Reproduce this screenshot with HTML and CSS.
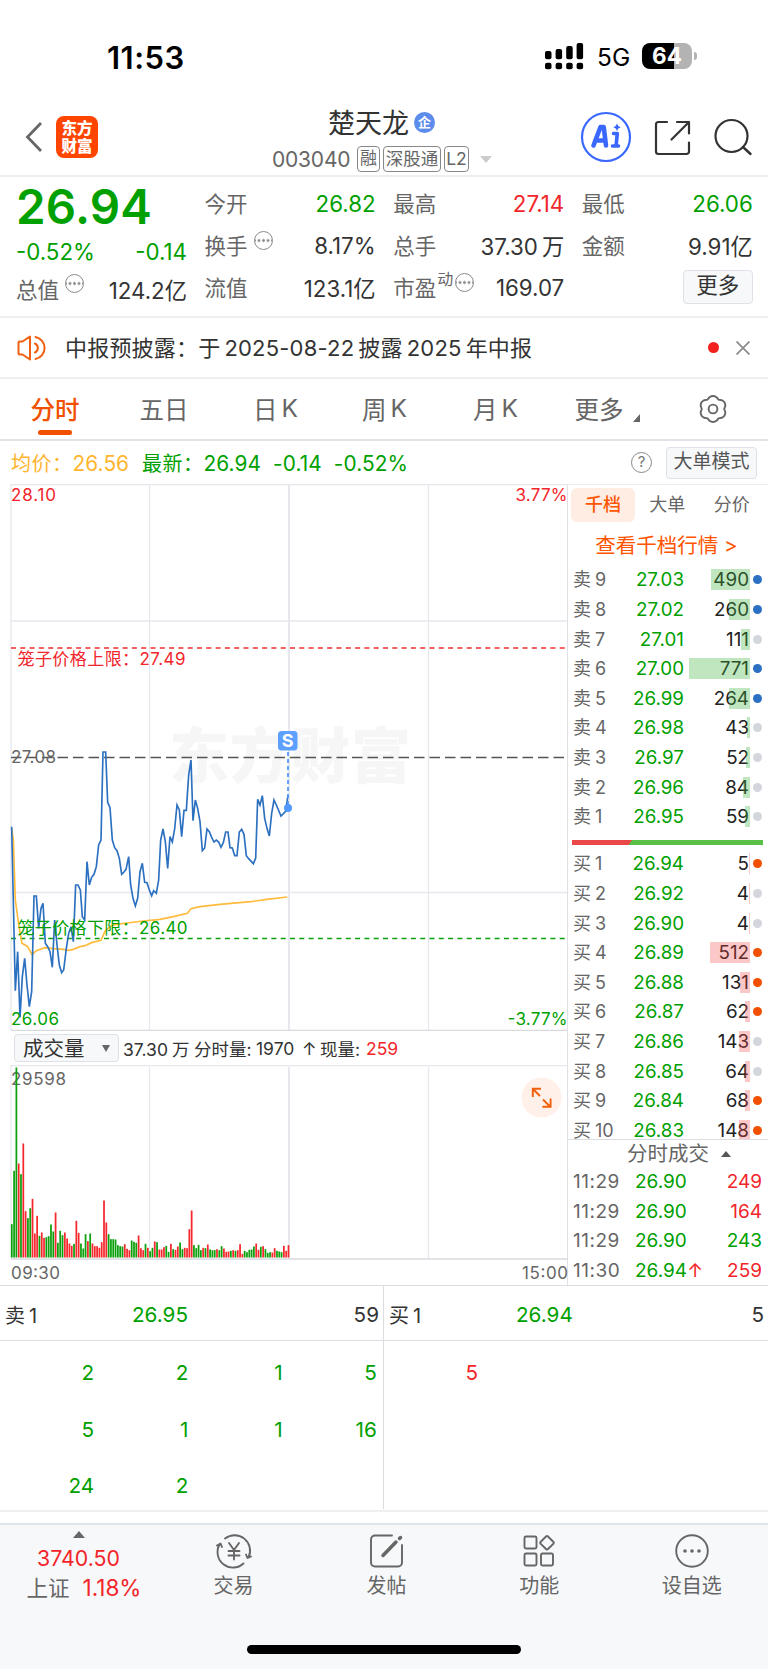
FILE: index.html
```html
<!DOCTYPE html>
<html lang="zh-CN">
<head>
<meta charset="utf-8">
<title>楚天龙 003040</title>
<link rel="stylesheet" href="styles.css">
</head>
<body>
<div class="app">
  <div class="status">
    <span class="time">11:53</span>
    <svg class="signal" width="39" height="27" viewBox="0 0 39 27">
      <g fill="#000">
        <rect x="0" y="8" width="6.5" height="8.3" rx="2"/><rect x="10.6" y="6" width="6.5" height="10.3" rx="2"/><rect x="21.2" y="3" width="6.5" height="13.3" rx="2"/><rect x="31.6" y="0" width="6.5" height="16.3" rx="2"/>
        <rect x="0" y="19.7" width="6.5" height="6.6" rx="2"/><rect x="10.6" y="19.7" width="6.5" height="6.6" rx="2"/><rect x="21.2" y="19.7" width="6.5" height="6.6" rx="2"/><rect x="31.6" y="19.7" width="6.5" height="6.6" rx="2"/>
      </g>
    </svg>
    <span class="net">5G</span>
    <span class="battery">64</span><span class="nub"></span>
  </div>

  <header class="header">
    <svg class="back" width="18" height="32" viewBox="0 0 18 32"><path d="M16 2 2.5 16 16 30" fill="none" stroke="#666" stroke-width="2.8"/></svg>
    <div class="logo"><span>东方</span><span>财富</span></div>
    <div class="title">
      <div class="name">楚天龙<span class="badge">企</span></div>
      <div class="code"><span class="num">003040</span><span class="tag t1">融</span><span class="tag t2">深股通</span><span class="tag t3">L2</span><i class="caret"></i></div>
    </div>
    <svg class="actions" width="176" height="52" viewBox="0 0 176 52" fill="none" stroke-linecap="round" stroke-linejoin="round">
      <circle cx="26" cy="26" r="24" stroke="#3a68ff" stroke-width="2.2"/>
      <path d="M13.5 34.5 20.5 16h3.2l2.3 18.5M17 29.5h7.500" stroke="#3a68ff" stroke-width="4.600"/>
      <path d="M33.500 22.500h3.800l-1.200 12M32.500 35h6" stroke="#3a68ff" stroke-width="3.600"/>
      <path d="M37 12.500q.7 3 3.700 3.700-3 .7-3.700 3.700-.7-3-3.700-3.700 3-.7 3.700-3.700z" fill="#3a68ff"/>
      <path d="M87 11H78.500a2.500 2.500 0 0 0-2.500 2.500V40.500a2.500 2.500 0 0 0 2.500 2.500H106.500a2.500 2.500 0 0 0 2.500-2.500V31.500M97 11h12v11.500M109 11 91.500 28.500" stroke="#333" stroke-width="2.2"/>
      <circle cx="151.500" cy="25" r="16" stroke="#333" stroke-width="2.2"/><path d="m163 36 7.500 7" stroke="#333" stroke-width="2.400"/>
    </svg>
  </header>

  <section class="quote">
    <div class="col">
      <div class="last">26.94</div>
      <div class="row chg g"><span>-0.52%</span><span>-0.14</span></div>
      <div class="row"><span class="lb">总值<i class="dots"></i></span><span>124.2亿</span></div>
    </div>
    <div class="col">
      <div class="row"><span class="lb">今开</span><span class="g">26.82</span></div>
      <div class="row"><span class="lb">换手<i class="dots"></i></span><span>8.17%</span></div>
      <div class="row"><span class="lb">流值</span><span>123.1亿</span></div>
    </div>
    <div class="col">
      <div class="row"><span class="lb">最高</span><span class="r">27.14</span></div>
      <div class="row"><span class="lb">总手</span><span>37.30<b class="sp"></b>万</span></div>
      <div class="row"><span class="lb">市盈<sup>动</sup><i class="dots tight"></i></span><span>169.07</span></div>
    </div>
    <div class="col">
      <div class="row"><span class="lb">最低</span><span class="g">26.06</span></div>
      <div class="row"><span class="lb">金额</span><span>9.91亿</span></div>
      <div class="row end"><span class="more">更多</span></div>
    </div>
  </section>

  <section class="notice">
    <svg width="30" height="26" viewBox="0 0 30 26" fill="none" stroke="#f06010" stroke-width="2" stroke-linejoin="round" stroke-linecap="round"><path d="M1.500 7.500Q1.500 6.500 2.500 6.500H5.500L13 1.500V24.500L5.500 19.500H2.500Q1.500 19.500 1.500 18.500zM18 8.500a5 5 0 0 1 0 9M18.500 2a11.200 11.200 0 0 1 0 22"/></svg>
    <span class="msg">中报预披露：于<b class="sp"></b>2025-08-22<b class="sp"></b>披露<b class="sp"></b>2025<b class="sp"></b>年中报</span>
    <i class="reddot"></i>
    <svg width="14" height="14" viewBox="0 0 14 14"><path d="M.5.500l13 13M13.500.500l-13 13" stroke="#8a8a8a" stroke-width="1.700"/></svg>
  </section>

  <nav class="tabs">
    <span class="on">分时</span><span>五日</span><span>日<b class="sp"></b>K</span><span>周<b class="sp"></b>K</span><span>月<b class="sp"></b>K</span><span class="mo">更多<i></i></span>
    <span class="gear"><svg width="30" height="30" viewBox="0 0 30 30" fill="none" stroke="#666" stroke-width="1.900" stroke-linejoin="round"><path d="M11.500 3.200Q15 .8 18.500 3.200L20.500 5.600 23.700 6.200Q27.500 8 27.300 12L26.200 15 27.300 18Q27.500 22 23.700 23.800L20.500 24.400 18.500 26.800Q15 29.200 11.500 26.800L9.500 24.400 6.300 23.800Q2.500 22 2.700 18L3.800 15 2.700 12Q2.500 8 6.300 6.200L9.500 5.600z"/><circle cx="15" cy="15" r="4.400"/></svg></span>
  </nav>

  <section class="info">
    <span class="avg">均价：<b>26.56</b></span><span class="now">最新：<b>26.94</b><b>-0.14</b><b>-0.52%</b></span>
    <span class="help">?</span><span class="mode">大单模式</span>
  </section>

  <main class="main">
    <div class="charts">
      <svg class="chart" width="568" height="547" viewBox="0 484 568 547">
        <text class="wm" x="169" y="778" textLength="242">东方财富</text>
        <g class="grid">
          <path d="M11 484.500H568M11 621H567M11 892.500H567"/><path d="M11 484V1030M149.500 484V1030M428.500 484V1030"/><path d="M289 484V1030" stroke-width="2"/>
        </g>
        <path d="M11 1030.500H568" stroke="#d9dade" stroke-width="1.500"/>
        <path d="M11 648H567" stroke="#ee2e2e" stroke-width="1.700" stroke-dasharray="5 4.300"/>
        <path d="M11 757.500H567" stroke="#555" stroke-width="1.500" stroke-dasharray="10.500 5"/>
        <path d="M11 938.500H567" stroke="#0ca00c" stroke-width="1.700" stroke-dasharray="5 4.300"/>
        <g transform="translate(0 640) scale(.33333)" fill="none" stroke-width="5" stroke-linejoin="miter">
          <polyline stroke="#ffbb3d" points="35,565 40,600 46,780 57,860 66,910 83,920 96,944 109,932 135,923 160,926 190,928 206,931 220,928 240,920 255,917 275,908 303,901 316,872 330,860 344,854 380,849 430,843 480,838 520,830 562,820 573,806 600,800 660,793 760,784 800,778 862,771"/>
          <polyline stroke="#2c70c0" points="35,560 46,1052 53,935 60,1132 67,1010 74,955 81,1035 88,1100 95,1055 102,768 109,768 116,865 123,805 129,790 136,910 143,920 150,935 157,982 164,840 171,915 178,975 185,998 191,990 199,925 206,880 213,860 220,905 227,735 234,735 241,750 247,830 254,840 261,665 268,735 275,712 282,703 289,680 296,615 303,600 309,336 317,336 323,487 330,503 337,600 344,623 351,632 358,655 365,703 372,696 378,688 386,650 392,735 399,775 406,798 413,775 420,695 427,670 434,727 441,728 448,750 455,767 461,752 469,760 476,720 482,600 489,567 496,605 503,685 510,590 517,606 524,567 531,495 538,510 545,590 552,511 559,511 566,405 573,360 579,542 586,480 593,505 600,545 607,632 614,624 621,567 628,575 635,592 642,606 649,600 656,606 663,622 670,608 677,576 684,576 690,623 697,624 704,647 711,647 718,576 725,568 732,583 739,647 746,656 760,671 767,655 773,478 780,495 787,467 794,535 801,565 808,588 815,520 822,480 829,495 843,528 857,514 864,465"/>
        </g>
        <path d="M288 752V808" stroke="#4f95fa" stroke-width="1.700" stroke-dasharray="4 3"/>
        <circle cx="288" cy="808" r="4" fill="#5098fc"/>
        <rect x="278" y="731" width="19.500" height="19.500" rx="3.500" fill="#5da0ff"/>
        <text x="287.700" y="747.300" text-anchor="middle" class="s">S</text>
        <g class="ax">
          <text x="11" y="501" fill="#f2252b" textLength="45">28.10</text><text x="567.500" y="501" fill="#f2252b" text-anchor="end" textLength="52">3.77%</text>
          <text x="17.500" y="665" fill="#f2252b" textLength="168">笼子价格上限：27.49</text>
          <text x="11" y="762.500" fill="#666" textLength="45">27.08</text>
          <text x="17.500" y="934" fill="#00a000" textLength="170">笼子价格下限：26.40</text>
          <text x="11" y="1024.500" fill="#00a000" textLength="48">26.06</text><text x="567.500" y="1024.500" fill="#00a000" text-anchor="end" textLength="60">-3.77%</text>
        </g>
      </svg>
      <div class="volhead"><span class="sel">成交量<i></i></span><span class="v1">37.30<b class="sp"></b>万</span><span class="v2">分时量:</span><span class="v3">1970</span><span class="v4">↑</span><span class="v5">现量:</span><span class="r">259</span></div>
      <svg class="vol" width="568" height="220" viewBox="0 1065 568 220">
        <g class="grid"><path d="M11 1065.500H568M11 1065V1258M149.500 1067V1258M428.500 1067V1258"/><path d="M289 1067V1258" stroke-width="2"/></g>
        <path d="M11 1259H568" stroke="#d9dade" stroke-width="1.500"/>
        <text class="ax" x="11" y="1084.500" fill="#666" textLength="55">29598</text>
        <g id="bars"></g>
        <circle cx="541.500" cy="1097.500" r="20" fill="#fff0e9"/>
        <path d="M540 1096l-7-7M532.800 1097v-8.200h8.200M543 1099.500l7 7M550.600 1098.500v8.200h-8.200" fill="none" stroke="#f2600c" stroke-width="1.900"/>
        <text class="ax" x="11" y="1279" fill="#666" textLength="49">09:30</text><text class="ax" x="568" y="1279" fill="#666" text-anchor="end" textLength="46">15:00</text>
      </svg>
    </div>

    <aside class="side">
      <div class="stabs"><span class="on">千档</span><span>大单</span><span>分价</span></div>
      <div class="link">查看千档行情 &gt;</div>
      <div class="book">
        <div class="o"><span>卖<b class="sp"></b>9</span><em>27.03</em><u>490<s style="width:39px"></s></u><i class="b"></i></div>
        <div class="o"><span>卖<b class="sp"></b>8</span><em>27.02</em><u>260<s style="width:21px"></s></u><i class="b"></i></div>
        <div class="o"><span>卖<b class="sp"></b>7</span><em>27.01</em><u>111<s style="width:9px"></s></u><i></i></div>
        <div class="o"><span>卖<b class="sp"></b>6</span><em>27.00</em><u>771<s style="width:61px"></s></u><i class="b"></i></div>
        <div class="o"><span>卖<b class="sp"></b>5</span><em>26.99</em><u>264<s style="width:21px"></s></u><i class="b"></i></div>
        <div class="o"><span>卖<b class="sp"></b>4</span><em>26.98</em><u>43<s style="width:3px"></s></u><i></i></div>
        <div class="o"><span>卖<b class="sp"></b>3</span><em>26.97</em><u>52<s style="width:4px"></s></u><i></i></div>
        <div class="o"><span>卖<b class="sp"></b>2</span><em>26.96</em><u>84<s style="width:7px"></s></u><i></i></div>
        <div class="o"><span>卖<b class="sp"></b>1</span><em>26.95</em><u>59<s style="width:5px"></s></u><i></i></div>
      </div>
      <div class="ratio"></div>
      <div class="book bid">
        <div class="o"><span>买<b class="sp"></b>1</span><em>26.94</em><u>5<s style="width:1px"></s></u><i class="b"></i></div>
        <div class="o"><span>买<b class="sp"></b>2</span><em>26.92</em><u>4<s style="width:1px"></s></u><i></i></div>
        <div class="o"><span>买<b class="sp"></b>3</span><em>26.90</em><u>4<s style="width:1px"></s></u><i></i></div>
        <div class="o"><span>买<b class="sp"></b>4</span><em>26.89</em><u>512<s style="width:40px"></s></u><i class="b"></i></div>
        <div class="o"><span>买<b class="sp"></b>5</span><em>26.88</em><u>131<s style="width:10px"></s></u><i class="b"></i></div>
        <div class="o"><span>买<b class="sp"></b>6</span><em>26.87</em><u>62<s style="width:5px"></s></u><i class="b"></i></div>
        <div class="o"><span>买<b class="sp"></b>7</span><em>26.86</em><u>143<s style="width:11px"></s></u><i></i></div>
        <div class="o"><span>买<b class="sp"></b>8</span><em>26.85</em><u>64<s style="width:5px"></s></u><i></i></div>
        <div class="o"><span>买<b class="sp"></b>9</span><em>26.84</em><u>68<s style="width:5px"></s></u><i class="b"></i></div>
        <div class="o"><span>买<b class="sp"></b>10</span><em>26.83</em><u>148<s style="width:11px"></s></u><i class="b"></i></div>
      </div>
      <div class="thead">分时成交<i></i></div>
      <div class="deals">
        <div><span>11:29</span><em>26.90</em><u class="r">249</u></div>
        <div><span>11:29</span><em>26.90</em><u class="r">164</u></div>
        <div><span>11:29</span><em>26.90</em><u class="g">243</u></div>
        <div><span>11:30</span><em>26.94<b class="r">↑</b></em><u class="r">259</u></div>
      </div>
    </aside>
  </main>

  <section class="queue">
    <div class="half">
      <div class="qh"><span>卖<b class="sp"></b>1</span><em>26.95</em><u>59</u></div>
      <div class="qg"><span>2</span><span>2</span><span>1</span><span>5</span><span>5</span><span>1</span><span>1</span><span>16</span><span>24</span><span>2</span></div>
    </div>
    <div class="half">
      <div class="qh"><span>买<b class="sp"></b>1</span><em>26.94</em><u>5</u></div>
      <div class="qg r"><span>5</span></div>
    </div>
  </section>

  <footer class="foot">
    <div class="idx"><i></i><b class="r">3740.50</b><span>上证<b class="r">1.18%</b></span></div>
    <div class="it"><svg width="38" height="36" viewBox="0 0 38 36" fill="none" stroke="#666" stroke-width="1.900" stroke-linecap="round" stroke-linejoin="round"><path d="M10 5.500A15.500 15.500 0 0 1 33.500 24.500M36 23.500l-3.500 1.500-1.500-3.500M28.500 30.500A15.500 15.500 0 0 1 4.500 11.500M2 12.500 5.500 10.500 7 14"/><path d="m14 10 5 7 5-7M19 17v9.500M13.500 18h11M13.500 22.500h11"/></svg><span>交易</span></div>
    <div class="it"><svg width="38" height="36" viewBox="0 0 38 36" fill="none" stroke="#666" stroke-width="1.900" stroke-linecap="round"><path d="M24 2.500H7a4 4 0 0 0-4 4V29.500a4 4 0 0 0 4 4H30a4 4 0 0 0 4-4V12"/><path d="M15 22.500 28 9" stroke-width="3.500"/><path d="m31.500 5.500 1-1" stroke-width="3.500"/></svg><span>发帖</span></div>
    <div class="it"><svg width="38" height="36" viewBox="0 0 38 36" fill="none" stroke="#666" stroke-width="1.900" stroke-linejoin="round"><rect x="4.500" y="3.500" width="12" height="12" rx="1.500"/><rect x="4.500" y="20.500" width="12" height="12" rx="1.500"/><rect x="21" y="20.500" width="12" height="12" rx="1.500"/><path d="M26 3.500Q27 2.500 28 3.500L33.500 9Q34.300 9.800 33.500 10.600L28 16Q27 17 26 16L20.500 10.600Q19.700 9.800 20.500 9z"/></svg><span>功能</span></div>
    <div class="it"><svg width="38" height="36" viewBox="0 0 38 36"><circle cx="19" cy="18" r="15.800" fill="none" stroke="#666" stroke-width="1.900"/><g fill="#666"><circle cx="12" cy="18" r="1.800"/><circle cx="19" cy="18" r="1.800"/><circle cx="26" cy="18" r="1.800"/></g></svg><span>设自选</span></div>
    <div class="home"></div>
  </footer>
</div>
<script src="bars.js"></script>
</body>
</html>
```

FILE: bars.js
```js
// One entry per minute: direction, then bar height in thirds of a pixel.
const data = "g100 g260 g570 r282 g250 r342 r139 g118 g148 r176 r72 r125 g65 r75 r59 g61 g64 g99 g78 r135 g44 g80 g67 r75 r57 r42 r35 g41 r110 r74 g42 g27 g70 r49 g72 r42 r34 r34 r29 r46 r171 r105 g70 g55 g55 g54 g37 g34 g33 r40 r26 r22 g51 g47 g44 r66 r28 r22 g41 r29 g19 g29 r48 g46 r24 r24 r31 g35 g17 r41 g25 r23 r33 g45 g25 r29 r28 r85 r141 g37 g28 g38 g22 r29 g28 r39 g24 g22 g22 r25 g22 g34 r27 r17 r18 g20 r22 g20 r22 r40 r11 g20 g16 g23 g24 g33 r42 r23 g32 r34 g25 g14 g16 r15 r28 g20 g18 g16 r35 r20 r37";
const host = document.getElementById("bars");
data.split(" ").forEach((item, i) => {
  const h = Number(item.slice(1)) / 3;
  const bar = document.createElementNS("http://www.w3.org/2000/svg", "rect");
  bar.setAttribute("x", (10.9 + i * 2.306).toFixed(2));
  bar.setAttribute("y", (1257.5 - h).toFixed(2));
  bar.setAttribute("width", "1.75");
  bar.setAttribute("height", h.toFixed(2));
  bar.setAttribute("fill", item[0] === "g" ? "#0ca00c" : "#f5282d");
  host.appendChild(bar);
});
```

FILE: styles.css
```css
* { box-sizing: border-box; }
body { margin: 0; background: #fff; color: #333; font-family: Inter, "Noto Sans CJK SC", sans-serif; font-size: 21px; }
i, em { font-style: normal; }
b { font-weight: inherit; }
u, s { text-decoration: none; }
svg { display: block; flex: none; }
.g { color: #00a000; }
.r { color: #f2252b; }
.sp { display: inline-block; width: 4px; }
.app { width: 768px; height: 1669px; overflow: hidden; display: flex; flex-direction: column; }

.status { height: 95px; padding: 17px 0 0 107px; display: flex; align-items: center; color: #000; }
.time { font-size: 31px; font-weight: 600; width: 438px; letter-spacing: .5px; padding-top: 2px; }
.net { font-size: 24.500px; margin-left: 13px; width: 45px; padding-top: 1px; }
.battery { width: 50px; height: 26px; border-radius: 8px; background: linear-gradient(90deg, #000 32px, #b3b3b3 32px); color: #fff; font-weight: 700; font-size: 22.500px; line-height: 26px; text-align: center; }
.nub { width: 3px; height: 8px; margin-left: 1.500px; background: #b3b3b3; border-radius: 0 4px 4px 0; }

.header { height: 82px; border-bottom: 2px solid #eee; display: flex; align-items: flex-start; padding-left: 25px; }
.back { margin-top: 26px; }
.logo { margin: 20.500px 0 0 13px; width: 42px; height: 42px; border-radius: 8px; background: #ff4500; color: #fff; font: 900 15.500px/17.500px "Noto Sans CJK SC", sans-serif; display: flex; flex-direction: column; align-items: center; justify-content: center; }
.title { margin-left: 175px; width: 307px; }
.name { height: 46px; margin: 3px 0 2px; padding-left: 55px; display: flex; align-items: center; font-size: 27px; }
.badge { width: 21px; height: 21px; margin: 2px 0 0 5px; border-radius: 50%; background: #5c8cec; color: #fff; font-size: 13px; font-weight: 700; line-height: 20px; text-align: center; }
.code { display: flex; align-items: center; height: 26px; color: #666; }
.code .num { width: 85px; font-size: 21px; letter-spacing: -.2px; margin-left: -1px; }
.tag { height: 26px; border: 1px solid #888; border-radius: 4px; font-size: 17.500px; line-height: 23px; text-align: center; margin-right: 3px; }
.t1 { width: 23px; font-size: 17px; } .t2 { width: 58px; } .t3 { width: 25px; }
.caret { margin-left: 8px; border: 6px solid transparent; border-top: 7px solid #ccc; border-bottom: 0; }
.actions { margin: 16px 0 0; }

.quote { height: 141px; border-bottom: 2px solid #efefef; padding: 5px 15px 0 16px; display: grid; grid-template-columns: repeat(4, 171px); column-gap: 17.600px; }
.row { height: 42px; display: flex; justify-content: space-between; align-items: center; font-size: 22.300px; white-space: nowrap; }
.lb { color: #666; display: flex; align-items: center; font-size: 21.500px; margin-top: -1px; }
.last { height: 49px; font-size: 47.500px; line-height: 49px; font-weight: 600; color: #00a000; letter-spacing: .2px; }
.chg { height: 40px; }
.col:first-child .row:last-child { height: 36px; padding-bottom: 1px; }
.dots { width: 19px; height: 19px; margin: -9px 0 0 6px; border: 1.500px solid #8c8c8c; border-radius: 50%; background: radial-gradient(circle, #888 1.300px, transparent 1.700px) 50% 50% / 4.500px 16px; }
.dots.tight { margin-left: 2px; }
sup { font-size: 16px; line-height: 16px; margin: -16px 0 0 1px; }
.end { justify-content: flex-end; font-size: 21.500px; }
.more { width: 70px; height: 34px; border: 1.500px solid #dfe1e8; border-radius: 4px; background: #f7f8fa; line-height: 29px; text-align: center; }

.notice { height: 61px; border-bottom: 2px solid #efefef; padding: 0 18px 0 17px; display: flex; align-items: center; }
.msg { margin: -3px 0 0 18px; flex: 1; font-size: 22px; letter-spacing: .2px; white-space: nowrap; }
.reddot { width: 11px; height: 11px; border-radius: 50%; background: #f2201f; margin-right: 17px; }

.tabs { height: 62px; border-bottom: 2px solid #e2e3e9; display: grid; grid-template-columns: 110px 108px 115px 103px 119px 88px 1fr; color: #666; font-size: 24.500px; }
.tabs span { height: 60px; display: flex; align-items: center; justify-content: center; position: relative; padding-bottom: 2px; }
.tabs .gear { padding: 0 0 0 15px; }
.tabs .on { color: #f05000; font-weight: 500; }
.tabs .on::after { content: ""; position: absolute; left: 38px; bottom: 4px; width: 34px; height: 5px; border-radius: 3px; background: #f05000; }
.mo i { position: absolute; left: 78px; top: 35px; border-left: 7px solid transparent; border-bottom: 8px solid #666; }

.info { height: 43px; padding: 0 11px; display: flex; align-items: center; font-size: 20px; white-space: nowrap; }
.info b { font-size: 20.800px; letter-spacing: .1px; }
.avg { color: #ffb52e; width: 131px; letter-spacing: .5px; } .now { color: #00a000; flex: 1; letter-spacing: .5px; }
.now b + b { margin-left: 12px; }
.help { width: 21px; height: 21px; border: 1.500px solid #888; border-radius: 50%; font-size: 15px; line-height: 18px; text-align: center; color: #777; margin-right: 14px; }
.mode { width: 91px; height: 32px; border: 1.500px solid #dfe1e8; border-radius: 4px; background: #f7f8fa; line-height: 28px; text-align: center; font-size: 19px; color: #555; }

.main { height: 802px; display: flex; border-bottom: 1.500px solid #dcdde2; }
.charts { width: 568px; border-right: 1px solid #e0e1e6; }
.grid { stroke: #e6e8ee; stroke-width: 1.300px; fill: none; }
.ax { font-size: 17px; }
.wm { font: 900 60px "Noto Sans CJK SC", sans-serif; fill: #f6f6f6; }
.s { font-size: 18px; font-weight: 700; fill: #fff; }
.volhead { height: 34px; padding-left: 14px; display: flex; align-items: center; font-size: 17.500px; white-space: nowrap; }
.sel { width: 105px; height: 28px; padding-left: 8px; border: 1.500px solid #dfe1e8; border-radius: 4px; background: #f7f8fa; font-size: 20.500px; line-height: 25px; display: flex; align-items: center; }
.sel i { margin-left: 17px; border: 4px solid transparent; border-top: 7px solid #666; border-bottom: 0; }
.v1 { margin-left: 4px; width: 71px; } .v2 { width: 62px; } .v3 { width: 46px; } .v4 { width: 18px; } .v5 { width: 46px; }

.side { width: 200px; border-top: 1.500px solid #eaebef; height: 800px; }
.stabs { display: flex; margin: 3px 0 0 3px; font-size: 18px; line-height: 34px; color: #666; text-align: center; }
.stabs span { width: 64.500px; }
.stabs .on { width: 64px; border-radius: 6px; background: #ffede4; color: #ff5500; font-weight: 500; }
.link { height: 42px; line-height: 47px; text-align: center; color: #ff5500; font-size: 20.500px; padding-right: 3px; white-space: nowrap; }
.book { height: 267px; margin-top: 1px; }
.o { height: 29.620px; padding: 0 7px 0 5px; display: grid; grid-template-columns: 47px 64px 66px 11px; align-items: center; font-size: 18.800px; line-height: 29px; color: #666; }
.o > span { font-size: 18px; white-space: nowrap; }
.o em { color: #00a000; text-align: right; }
.o u { color: #222; text-align: right; position: relative; height: 29px; padding-right: 1px; }
.o s { position: absolute; right: 0; top: 4px; height: 21px; background: rgba(64, 180, 64, .33); }
.o > i { width: 9px; height: 9px; border-radius: 50%; background: #d3d6dc; margin-left: 3px; }
.o > i.b { background: #2c70c4; }
.bid s { background: rgba(245, 70, 70, .3); }
.bid .o > i.b { background: #f05000; }
.ratio { margin: 8px 5px 4px 4px; height: 5px; background: linear-gradient(125deg, #ea4848 49px, #5abf45 49.500px); }
.book.bid { height: 291px; overflow: hidden; border-bottom: 1.500px solid #dcdde2; }
.thead { height: 27px; line-height: 27px; font-size: 20.500px; color: #666; padding-left: 59px; display: flex; align-items: center; }
.thead i { margin-left: 12px; border: 5px solid transparent; border-bottom: 6px solid #555; border-top: 0; }
.deals div { height: 29.500px; padding: 0 6px 0 5px; display: grid; grid-template-columns: 62px 80px 1fr; align-items: center; font-size: 19px; }
.deals span { color: #666; font-size: 19px; letter-spacing: .5px; } .deals em { color: #00a000; white-space: nowrap; } .deals u { text-align: right; }

.queue { height: 226px; display: flex; border-bottom: 2px solid #efefef; }
.half { width: 384px; height: 223px; }
.half:first-child { border-right: 1.500px solid #dcdde2; }
.qh { height: 54.500px; border-bottom: 1.500px solid #dcdde2; padding: 4px 4px 0 5px; display: grid; grid-template-columns: 127px 1fr 60px; align-items: center; font-size: 20.700px; }
.qh span { font-size: 20px; }
.qh em { color: #00a000; } .qh u { text-align: right; }
.qg { color: #00a000; padding-top: 4px; display: grid; grid-template-columns: repeat(4, 94.200px); grid-auto-rows: 56.500px; align-items: center; text-align: right; font-size: 20.700px; }
.qg.r { color: #f2252b; }

.foot { margin-top: 11px; height: 146px; border-top: 2px solid #dfe3ea; background: #f7f8fa; color: #666; display: grid; grid-template-columns: 157px 153px 153px 152.500px 152.500px; grid-template-rows: 120px 10px; }
.idx { display: flex; flex-direction: column; align-items: center; padding-top: 6px; font-size: 21.300px; white-space: nowrap; }
.idx > i { border: 6px solid transparent; border-bottom: 7px solid #666; border-top: 0; }
.idx > b { margin-top: 5px; line-height: 30px; }
.idx > span { line-height: 30px; padding-left: 11px; font-size: 21.500px; }
.idx > span b { margin-left: 13px; font-size: 22.500px; }
.it { display: flex; flex-direction: column; align-items: center; padding-top: 8px; font-size: 20px; }
.it span { line-height: 28px; margin-top: 3px; }
.home { grid-column: 1 / -1; justify-self: center; width: 274px; height: 9px; border-radius: 5px; background: #000; }
```
